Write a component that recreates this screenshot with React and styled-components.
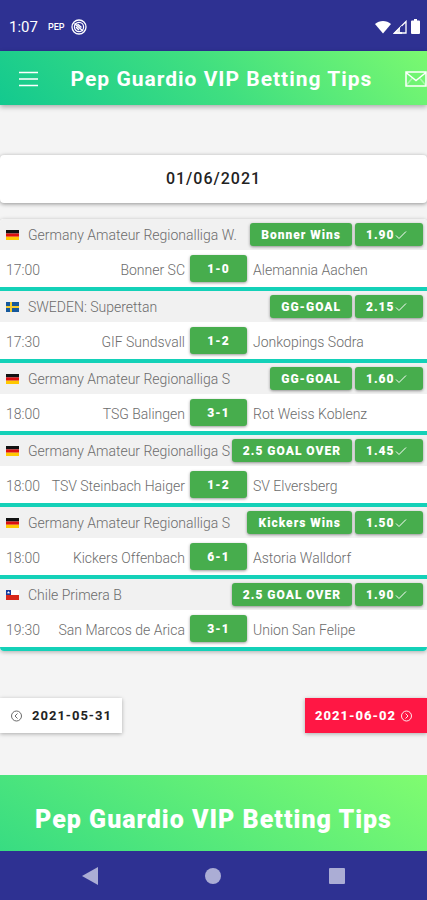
import React from "react";
import styled, {createGlobalStyle} from "styled-components";

const GlobalStyle = createGlobalStyle`
  * {
    box-sizing: border-box;
  }

  body {
    margin: 0;
    background: #f4f4f4;
    color: #6c6c6c;
    font-family: Roboto, "Noto Sans", sans-serif;
    font-size: 14px;
    font-weight: 300;
    line-height: 20px;
  }

  button {
    border: 0;
    padding: 0;
    background: none;
    color: inherit;
    font: inherit;
    cursor: pointer;
  }

  svg {
    display: block;
    flex: none;
  }
`;

const Screen = styled.div`
  min-height: 100vh;
  display: flex;
  flex-direction: column;
`;

const StatusBar = styled.div`
  height: 51px;
  padding: 2px 7px 0 9px;
  display: flex;
  align-items: center;
  background: #2e3192;
  color: #ffffff;
  font-weight: 400;
`;

const Clock = styled.span`
  font-size: 15px;
  margin-right: 10px;
`;

const Carrier = styled.span`
  font-size: 9px;
  font-weight: 500;
  margin-right: 6px;
`;

const StatusIcons = styled.div`
  display: flex;
  align-items: center;
  gap: 2px;
  margin-left: auto;
`;

const Header = styled.header`
  height: 54px;
  padding: 2px 0 0 18px;
  display: flex;
  align-items: center;
  justify-content: space-between;
  background: linear-gradient(45deg, #13c98f 0%, #40df80 50%, #7bf970 100%);
  box-shadow: 0 2px 5px rgba(0, 0, 0, 0.3);
  color: #ffffff;
`;

const HeaderTitle = styled.h1`
  margin: 0;
  font-size: 21px;
  font-weight: 700;
  letter-spacing: 1px;
  white-space: nowrap;
`;

const Main = styled.main`
  flex: 1;
  padding-top: 50px;
`;

const DateCard = styled.h2`
  margin: 0 0 16px;
  height: 48px;
  display: flex;
  align-items: center;
  justify-content: center;
  border-radius: 4px;
  background: #ffffff;
  box-shadow: 0 1px 4px rgba(0, 0, 0, 0.4);
  color: #222222;
  font-size: 16px;
  font-weight: 500;
  letter-spacing: 1px;
`;

const MatchList = styled.section`
  border-radius: 4px;
  overflow: hidden;
  box-shadow: 0 1px 4px rgba(0, 0, 0, 0.3);
`;

const Match = styled.article`
  border-bottom: 4px solid #14d1b8;
  background: #ffffff;
`;

const MatchHead = styled.div`
  height: 31px;
  padding: 0 4px 0 6px;
  display: flex;
  align-items: center;
  gap: 3px;
  background: #f1f1f1;
`;

const League = styled.span`
  flex: 1;
  margin-left: 6px;
  min-width: 0;
  white-space: nowrap;
`;

const MatchBody = styled.div`
  height: 37px;
  display: grid;
  grid-template-columns: minmax(0, 19fr) 57px minmax(0, 18fr);
`;

const Home = styled.div`
  padding: 10px 5px 0 6px;
  display: flex;
  justify-content: space-between;
  white-space: nowrap;
`;

const Away = styled.div`
  padding: 10px 0 0 6px;
  white-space: nowrap;
`;

const Pill = styled.button`
  && {
    height: ${({$tall}) => ($tall ? 27 : 23)}px;
    min-width: ${({$wide}) => ($wide ? 68 : 57)}px;
    margin-top: ${({$tall}) => ($tall ? 5 : 0)}px;
    padding: 0 11px;
    display: flex;
    align-items: center;
    justify-content: ${({$wide}) => ($wide ? "flex-start" : "center")};
    border-radius: 3px;
    background: #47ad4d;
    box-shadow: 0 1px 3px rgba(0, 0, 0, 0.4);
    color: #ffffff;
    font-size: 12px;
    font-weight: 900;
    letter-spacing: 1px;
    white-space: nowrap;
  }
`;

const Pager = styled.nav`
  display: flex;
  justify-content: space-between;
  padding: 47px 0 42px;
`;

const PagerButton = styled.button`
  && {
    height: 35px;
    padding: 0 ${({$next}) => ($next ? 14 : 10)}px 0 10px;
    display: flex;
    align-items: center;
    gap: ${({$next}) => ($next ? 4 : 9)}px;
    background: ${({$next}) => ($next ? "#ff1744" : "#ffffff")};
    color: ${({$next}) => ($next ? "#ffffff" : "#222222")};
    box-shadow: 0 1px 4px rgba(0, 0, 0, 0.3);
    font-size: 13px;
    font-weight: ${({$next}) => ($next ? 800 : 700)};
    letter-spacing: 1px;
  }
`;

const Footer = styled.footer`
  height: 76px;
  padding-top: 14px;
  display: flex;
  align-items: center;
  justify-content: center;
  background: linear-gradient(30deg, #38dc82 0%, #80fc70 100%);
  color: #ffffff;
  font-size: 25px;
  font-weight: 900;
  letter-spacing: 1px;
  white-space: nowrap;
`;

const SystemNav = styled.nav`
  height: 49px;
  padding: 0 28px;
  display: grid;
  grid-template-columns: repeat(3, 1fr);
  align-items: center;
  justify-items: center;
  background: #2e3192;
`;

const MenuIcon = () => (
  <svg width="20" height="16" viewBox="0 0 20 16" stroke="currentColor" strokeWidth="1.5">
    <path d="M1 1.5h19M1 8h19M1 14.5h19"/>
  </svg>
);

const MailIcon = () => (
  <svg width="22" height="16" viewBox="0 0 22 16" fill="none" stroke="currentColor" strokeWidth="1.5">
    <path d="M1 1h20v14H1zM1 1.5l10 8 10-8"/>
    <path d="M1 14.5l6-7M21 14.5l-6-7" strokeOpacity="0.4"/>
  </svg>
);

const BallIcon = () => (
  <svg width="16" height="16" viewBox="0 0 16 16" fill="none" stroke="currentColor">
    <circle cx="8" cy="8" r="7" strokeWidth="1.3"/>
    <circle cx="8" cy="8" r="4.600" strokeWidth="1.2"/>
    <path d="M3.500 4.500l8.500 7.500M6.500 5l4 3.500M5 8l3 3" strokeWidth="1.5"/>
  </svg>
);

const WifiIcon = () => (
  <svg width="16" height="14" viewBox="0 0 16 14" fill="currentColor">
    <path d="M8 13.500L0 4c4.500-4 11.500-4 16 0z"/>
  </svg>
);

const SignalIcon = () => (
  <svg width="14" height="14" viewBox="0 0 14 14">
    <path d="M1.500 13L13 1.500V13z" fill="none" stroke="currentColor" strokeWidth="1.3"/>
    <path d="M0 14l9-9v9z" fill="currentColor" fillOpacity="0.85"/>
    <path d="M9 5.500l-2 2V12h2z" fill="#2e3192"/>
  </svg>
);

const BatteryIcon = () => (
  <svg width="9" height="15" viewBox="0 0 9 15" fill="currentColor">
    <path d="M3 0h3v1.500h2a1 1 0 0 1 1 1V14a1 1 0 0 1-1 1H1a1 1 0 0 1-1-1V2.500a1 1 0 0 1 1-1h2z"/>
  </svg>
);

const CheckIcon = () => (
  <svg width="12" height="10" viewBox="0 0 12 10" fill="none" stroke="currentColor">
    <path d="M1 5.500L4 8.500 11 1.500"/>
  </svg>
);

const CircleArrow = ({next}) => (
  <svg width="13" height="12" viewBox="0 0 13 12" fill="none" stroke="currentColor" strokeWidth="0.9" opacity={next ? 1 : 0.75}>
    <circle cx="6.500" cy="6" r="5"/>
    <path d={next ? "M5.500 3.500L8 6 5.500 8.500" : "M7.500 3.500L5 6l2.500 2.500"}/>
  </svg>
);

const Flag = ({country}) => (
  <svg width="13" height="10" viewBox="0 0 13 10" role="img" aria-label={country}>
    {country === "Germany" && <>
      <path fill="#111111" d="M0 0h13v3.400H0z"/>
      <path fill="#dd1010" d="M0 3.400h13v3.300H0z"/>
      <path fill="#ffc800" d="M0 6.700h13V10H0z"/>
    </>}
    {country === "Sweden" && <>
      <path fill="#16599c" d="M0 0h13v10H0z"/>
      <path fill="#f5cc30" d="M4 0h2v10H4zM0 4h13v2H0z"/>
    </>}
    {country === "Chile" && <>
      <path fill="#ffffff" d="M0 0h13v5H0z"/>
      <path fill="#d8281c" d="M0 5h13v5H0z"/>
      <path fill="#153ca0" d="M0 0h5v5H0z"/>
      <path fill="#ffffff" d="M2.500 1l.5 1 1 .1-.7.7.2 1-1-.5-1 .5.2-1L1 2.100l1-.1z"/>
    </>}
  </svg>
);

const title = "Pep Guardio VIP Betting Tips";

const matches = [
  {country: "Germany", league: "Germany Amateur Regionalliga W.", tip: "Bonner Wins", odds: "1.90", time: "17:00", home: "Bonner SC", score: "1-0", away: "Alemannia Aachen"},
  {country: "Sweden", league: "SWEDEN: Superettan", tip: "GG-GOAL", odds: "2.15", time: "17:30", home: "GIF Sundsvall", score: "1-2", away: "Jonkopings Sodra"},
  {country: "Germany", league: "Germany Amateur Regionalliga S", tip: "GG-GOAL", odds: "1.60", time: "18:00", home: "TSG Balingen", score: "3-1", away: "Rot Weiss Koblenz"},
  {country: "Germany", league: "Germany Amateur Regionalliga S", tip: "2.5 GOAL OVER", odds: "1.45", time: "18:00", home: "TSV Steinbach Haiger", score: "1-2", away: "SV Elversberg"},
  {country: "Germany", league: "Germany Amateur Regionalliga S", tip: "Kickers Wins", odds: "1.50", time: "18:00", home: "Kickers Offenbach", score: "6-1", away: "Astoria Walldorf"},
  {country: "Chile", league: "Chile Primera B", tip: "2.5 GOAL OVER", odds: "1.90", time: "19:30", home: "San Marcos de Arica", score: "3-1", away: "Union San Felipe"},
];

const MatchCard = ({match}) => {
  const {country, league, tip, odds, time, home, score, away} = match;
  return (<Match>
    <MatchHead>
      <Flag country={country}/>
      <League>{league}</League>
      <Pill>{tip}</Pill>
      <Pill $wide>{odds}<CheckIcon/></Pill>
    </MatchHead>
    <MatchBody>
      <Home><span>{time}</span><span>{home}</span></Home>
      <Pill $tall>{score}</Pill>
      <Away>{away}</Away>
    </MatchBody>
  </Match>);
}

const App = () => {
  return (<Screen>
    <GlobalStyle/>
    <StatusBar>
      <Clock>1:07</Clock>
      <Carrier>PEP</Carrier>
      <BallIcon/>
      <StatusIcons><WifiIcon/><SignalIcon/><span/><BatteryIcon/></StatusIcons>
    </StatusBar>
    <Header>
      <button aria-label="Menu"><MenuIcon/></button>
      <HeaderTitle>{title}</HeaderTitle>
      <button aria-label="Messages"><MailIcon/></button>
    </Header>
    <Main>
      <DateCard>01/06/2021</DateCard>
      <MatchList>
        {matches.map((match) => <MatchCard key={match.home} match={match}/>)}
      </MatchList>
      <Pager>
        <PagerButton><CircleArrow/>2021-05-31</PagerButton>
        <PagerButton $next>2021-06-02<CircleArrow next/></PagerButton>
      </Pager>
    </Main>
    <Footer>{title}</Footer>
    <SystemNav>
      <button aria-label="Back">
        <svg width="16" height="18" viewBox="0 0 16 18"><path d="M16 0v18L0 9z" fill="#abadd5"/></svg>
      </button>
      <button aria-label="Home">
        <svg width="16" height="16" viewBox="0 0 16 16"><circle cx="8" cy="8" r="8" fill="#abadd5"/></svg>
      </button>
      <button aria-label="Recent apps">
        <svg width="16" height="16" viewBox="0 0 16 16"><rect width="16" height="16" rx="1" fill="#abadd5"/></svg>
      </button>
    </SystemNav>
  </Screen>);
}

export default App;
